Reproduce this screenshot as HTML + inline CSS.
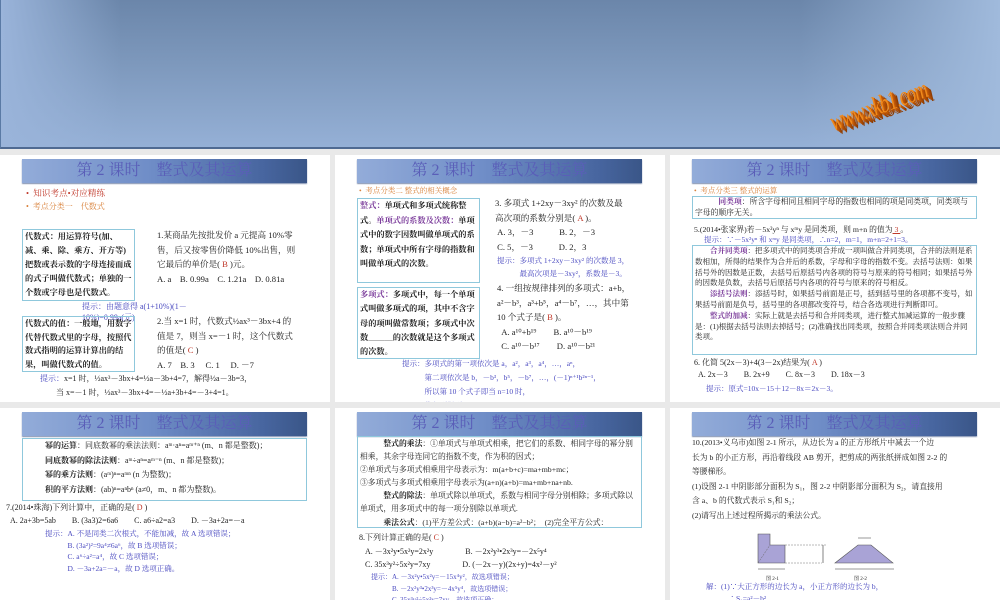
<!DOCTYPE html>
<html><head><meta charset="utf-8"><style>
*{margin:0;padding:0;box-sizing:border-box}
body{width:1000px;height:600px;overflow:hidden;background:#e9e9e9;font-family:"Liberation Serif","Noto Serif CJK SC","Noto Sans CJK SC",serif;color:#222;position:relative}
.ban{position:absolute;left:0;top:0;width:1000px;height:149px;background:linear-gradient(180deg,#6b86aa 0%,#7e99bd 45%,#95b0d6 100%);border-bottom:2px solid #4f6a92;border-left:1px solid #5a7aa5}
.ban:before{content:"";position:absolute;left:0;top:0;width:120px;height:147px;background:linear-gradient(90deg,#9ab4da,rgba(154,180,218,0))}
.ban:after{content:"";position:absolute;right:0;top:0;width:200px;height:147px;background:linear-gradient(270deg,#a0badc,rgba(160,186,220,0))}
.wm{position:absolute;left:828px;top:96px;transform:rotate(-20deg) scaleY(1.4);font:italic 19px "Liberation Serif",serif;color:#f08a1c;text-shadow:1px 1px 0 #c35a08,2px 2px 0 #b04e05,3px 3px 0 #a04504,4px 4px 0 #8d3c03;letter-spacing:-1px;z-index:2}
.s{position:absolute;background:#fff;overflow:hidden}
.t{position:absolute;height:24px;background:linear-gradient(90deg,#93acd9 0%,#6f8dc7 45%,#47659f 85%,#3a5688 100%);color:#5a5eb8;font:16px "Liberation Serif","Noto Serif CJK SC",serif;text-align:center;line-height:24px;box-shadow:0 1px 1px #8090b0;white-space:nowrap}
.ab{position:absolute;font-size:8.6px;line-height:14.5px;white-space:nowrap}
.bx{position:absolute;border:1px solid #8fc8dc;font-size:8.2px;line-height:14.5px;padding:0 2px;font-weight:bold;overflow:hidden}
.r{color:#c0392b}.o{color:#d9823b}.p{color:#7a3a9a}.b{color:#4a4ac0}
</style></head><body>
<div class="ban"></div>
<div class="wm">www.xkb1.com</div>

<!-- slide 1 -->
<div class="s" style="left:0;top:155px;width:330px;height:247px">
<div class="t" style="left:22px;top:4px;width:285px">第 2 课时&nbsp;&nbsp;&nbsp;&nbsp;整式及其运算</div>
<div class="ab r" style="left:26px;top:31px">•&nbsp; 知识考点•对应精练</div>
<div class="ab o" style="left:26px;top:45px;font-size:8px">•&nbsp; 考点分类一　代数式</div>
<div class="bx" style="left:22px;top:74px;width:113px;height:72px;line-height:14px">代数式：用运算符号(加、减、乘、除、乘方、开方等)把数或表示数的字母连接而成的式子叫做代数式；单独的一个数或字母也是代数式。</div>
<div class="ab" style="left:157px;top:73px;line-height:14.5px">1.某商品先按批发价 a 元提高 10%零<br>售，后又按零售价降低 10%出售，则<br>它最后的单价是( <span class="r">B</span> )元。<br>A. a　B. 0.99a　C. 1.21a　D. 0.81a</div>
<div class="ab b" style="left:82px;top:146px;font-size:8px;line-height:11px">提示：由题意得 a(1+10%)(1－<br>10%)=0.99a(元)</div>
<div class="bx" style="left:22px;top:161px;width:113px;height:56px;line-height:13.5px">代数式的值：一般地，用数字代替代数式里的字母，按照代数式指明的运算计算出的结果，叫做代数式的值。</div>
<div class="ab" style="left:157px;top:159px">2.当 x=1 时，代数式½ax³－3bx+4 的<br>值是 7，则当 x=－1 时，这个代数式<br>的值是( <span class="r">C</span> )<br>A. 7　B. 3　 C. 1　 D. －7</div>
<div class="ab" style="left:40px;top:217px;font-size:8px;line-height:14px"><span class="b">提示：</span>x=1 时，½ax³－3bx+4=½a－3b+4=7，解得½a－3b=3，<br>　　当 x=－1 时，½ax³－3bx+4=－½a+3b+4=－3+4=1。</div>
</div>

<!-- slide 2 -->
<div class="s" style="left:335px;top:155px;width:330px;height:247px">
<div class="t" style="left:22px;top:4px;width:285px">第 2 课时&nbsp;&nbsp;&nbsp;&nbsp;整式及其运算</div>
<div class="ab o" style="left:24px;top:29px;font-size:7.5px">•&nbsp; 考点分类二 整式的相关概念</div>
<div class="bx" style="left:22px;top:43px;width:123px;height:85px;line-height:14.5px"><span class="p">整式：</span>单项式和多项式统称整式。<span class="p">单项式的系数及次数：</span>单项式中的数字因数叫做单项式的系数；单项式中所有字母的指数和叫做单项式的次数。</div>
<div class="bx" style="left:22px;top:132px;width:123px;height:72px;line-height:14.3px"><span class="p">多项式：</span>多项式中，每一个单项式叫做多项式的项，其中不含字母的项叫做常数项；多项式中次数＿＿＿的次数就是这个多项式的次数。</div>
<div class="ab" style="left:160px;top:41px">3. 多项式 1+2xy－3xy² 的次数及最<br>高次项的系数分别是( <span class="r">A</span> )。<br>&nbsp;A. 3，－3　　　B. 2，－3<br>&nbsp;C. 5，－3　　　D. 2，3</div>
<div class="ab b" style="left:162px;top:99px;font-size:7.5px;line-height:13px">提示：多项式 1+2xy－3xy² 的次数是 3，<br>　　　最高次项是－3xy²，系数是－3。</div>
<div class="ab" style="left:162px;top:126px">4. 一组按规律排列的多项式：a+b，<br>a²－b³，a³+b⁵，a⁴－b⁷，…，其中第<br>10 个式子是( <span class="r">B</span> )。<br>&nbsp;&nbsp;A. a¹⁰+b¹⁹　　B. a¹⁰－b¹⁹<br>&nbsp;&nbsp;C. a¹⁰－b¹⁷　　D. a¹⁰－b²¹</div>
<div class="ab b" style="left:67px;top:202px;font-size:7.5px;line-height:14px">提示：多项式的第一项依次是 a，a²，a³，a⁴，…，aⁿ，<br>　　　第二项依次是 b，－b³，b⁵，－b⁷，…，(－1)ⁿ⁺¹b²ⁿ⁻¹，<br>　　　所以第 10 个式子即当 n=10 时，<br>　　　代入到得到 aⁿ+(－1)ⁿ⁺¹b²ⁿ⁻¹=a¹⁰－b¹⁹。</div>
</div>

<!-- slide 3 -->
<div class="s" style="left:670px;top:155px;width:330px;height:247px">
<div class="t" style="left:22px;top:4px;width:285px">第 2 课时&nbsp;&nbsp;&nbsp;&nbsp;整式及其运算</div>
<div class="ab o" style="left:24px;top:29px;font-size:7.5px">•&nbsp; 考点分类三 整式的运算</div>
<div class="bx" style="left:22px;top:41px;width:285px;height:23px;font-weight:normal;font-size:7.8px;line-height:10.5px">　　　<span class="p"><b>同类项</b></span>：所含字母相同且相同字母的指数也相同的项是同类项，同类项与字母的顺序无关。</div>
<div class="ab" style="left:24px;top:68px;font-size:7.8px">5.(2014•张家界)若－5x²yⁿ 与 xᵐy 是同类项，则 m+n 的值为<u class="r"> 3 </u>。</div>
<div class="ab b" style="left:34px;top:79px;font-size:7.5px;line-height:11px">提示：∵－5x²yⁿ 和 xᵐy 是同类项，∴n=2，m=1，m+n=2+1=3。</div>
<div class="bx" style="left:22px;top:90px;width:285px;height:110px;font-weight:normal;font-size:7.5px;line-height:10.8px">　　<b class="p">合并同类项</b>：把多项式中的同类项合并成一项叫做合并同类项，合并的法则是系数相加，所得的结果作为合并后的系数，字母和字母的指数不变。去括号法则：如果括号外的因数是正数，去括号后原括号内各项的符号与原来的符号相同；如果括号外的因数是负数，去括号后原括号内各项的符号与原来的符号相反。<br>　　<b class="p">添括号法则</b>：添括号时，如果括号前面是正号，括到括号里的各项都不变号，如果括号前面是负号，括号里的各项都改变符号，结合各选项进行判断即可。<br>　　<b class="p">整式的加减</b>：实际上就是去括号和合并同类项，进行整式加减运算的一般步骤是：(1)根据去括号法则去掉括号；(2)准确找出同类项，按照合并同类项法则合并同类项。</div>
<div class="ab" style="left:24px;top:202px;font-size:8px;line-height:11.5px">6. 化简 5(2x－3)+4(3－2x)结果为( <span class="r">A</span> )<br>&nbsp;&nbsp;A. 2x－3　　B. 2x+9　　C. 8x－3　　D. 18x－3</div>
<div class="ab b" style="left:36px;top:229px;font-size:7.5px;line-height:10px">提示：原式=10x－15＋12－8x＝2x－3。</div>
</div>

<!-- slide 4 -->
<div class="s" style="left:0;top:408px;width:330px;height:192px">
<div class="t" style="left:22px;top:4px;width:285px">第 2 课时&nbsp;&nbsp;&nbsp;&nbsp;整式及其运算</div>
<div class="bx" style="left:22px;top:30px;width:285px;height:63px;font-weight:normal;font-size:8px;line-height:14.5px;padding-left:22px"><b>幂的运算</b>：同底数幂的乘法法则：aᵐ·aⁿ=aᵐ⁺ⁿ (m、n 都是整数)；<br><b>同底数幂的除法法则</b>：aᵐ÷aⁿ=aᵐ⁻ⁿ (m、n 都是整数)；<br><b>幂的乘方法则</b>：(aᵐ)ⁿ=aᵐⁿ (n 为整数)；<br><b>积的平方法则</b>：(ab)ⁿ=aⁿbⁿ (a≠0，m、n 都为整数)。</div>
<div class="ab" style="left:6px;top:94px;font-size:8px;line-height:12.5px">7.(2014•珠海)下列计算中，正确的是( <span class="r">D</span> )<br>&nbsp;&nbsp;A. 2a+3b=5ab　　B. (3a3)2=6a6　　C. a6÷a2=a3　　D. －3a+2a=－a</div>
<div class="ab b" style="left:45px;top:120px;font-size:7.5px;line-height:11.5px">提示：A. 不是同类二次根式，不能加减，故 A 选项错误；<br>　　　B. (3a²)²=9a⁴≠6a⁶，故 B 选项错误；<br>　　　C. a⁶÷a²=a⁴，故 C 选项错误；<br>　　　D. －3a+2a=－a，故 D 选项正确。</div>
</div>

<!-- slide 5 -->
<div class="s" style="left:335px;top:408px;width:330px;height:192px">
<div class="t" style="left:22px;top:4px;width:285px">第 2 课时&nbsp;&nbsp;&nbsp;&nbsp;整式及其运算</div>
<div class="bx" style="left:22px;top:28px;width:285px;height:92px;font-weight:normal;font-size:7.8px;line-height:13.1px">　　　<b>整式的乘法</b>：①单项式与单项式相乘，把它们的系数、相同字母的幂分别相乘，其余字母连同它的指数不变，作为积的因式；<br>②单项式与多项式相乘用字母表示为：m(a+b+c)=ma+mb+mc；<br>③多项式与多项式相乘用字母表示为(a+n)(a+b)=ma+mb+na+nb.<br>　　　<b>整式的除法</b>：单项式除以单项式，系数与相同字母分别相除；多项式除以单项式，用多项式中的每一项分别除以单项式.<br>　　　<b>乘法公式</b>：(1)平方差公式：(a+b)(a−b)=a²−b²；　(2)完全平方公式：<br><span style="font-size:6.5px">(a±b)²=a²±2ab+b²</span>.</div>
<div class="ab" style="left:24px;top:123px;font-size:8px;line-height:13.5px">8.下列计算正确的是( <span class="r">C</span> )<br>&nbsp;&nbsp;&nbsp;A. －3x²y•5x²y=2x²y　　　　B. －2x²y³•2x³y=－2x⁵y⁴<br>&nbsp;&nbsp;&nbsp;C. 35x³y²÷5x²y=7xy　　　　D. (－2x－y)(2x+y)=4x²－y²</div>
<div class="ab b" style="left:36px;top:164px;font-size:7px;line-height:11.5px">提示：A. －3x²y•5x²y=－15x⁴y²，故选项错误；<br>　　　B. －2x²y³•2x³y=－4x⁵y⁴，故选项错误；<br>　　　C. 35x³y²÷5x²y=7xy，故选项正确；</div>
</div>

<!-- slide 6 -->
<div class="s" style="left:670px;top:408px;width:330px;height:192px">
<div class="t" style="left:22px;top:4px;width:285px">第 2 课时&nbsp;&nbsp;&nbsp;&nbsp;整式及其运算</div>
<div class="ab" style="left:22px;top:28px;line-height:14.5px;font-size:7.8px">10.(2013•义乌市)如图 2-1 所示，从边长为 a 的正方形纸片中减去一个边<br>长为 b 的小正方形，再沿着线段 AB 剪开，把剪成的两张纸拼成如图 2-2 的<br>等腰梯形。<br>(1)设图 2-1 中阴影部分面积为 S₁，图 2-2 中阴影部分面积为 S₂，请直接用<br>含 a、b 的代数式表示 S₁和 S₂；<br>(2)请写出上述过程所揭示的乘法公式。</div>
<svg style="position:absolute;left:70px;top:124px" width="160" height="48">
<path d="M18 2 H30 V13 H45 V31 H18 Z" fill="#a9a3d6" stroke="#555" stroke-width=".6"/>
<path d="M18 31 L30 13" stroke="#666" stroke-width=".5" stroke-dasharray="2 1"/>
<path d="M45 13 H86 M45 31 H82" stroke="#777" stroke-width=".5" stroke-dasharray="2 1"/>
<path d="M83 13 V31 M18 37 H45" stroke="#333" stroke-width=".6"/>
<path d="M118 13 H131 L153 31 H95 Z" fill="#a9a3d6" stroke="#555" stroke-width=".6"/>
<path d="M95 37 H154 M118 6 H131" stroke="#333" stroke-width=".6"/>
</svg>
<div class="ab" style="left:96px;top:165px;font-size:5px">图 2-1</div>
<div class="ab" style="left:184px;top:165px;font-size:5px">图 2-2</div>
<div class="ab b" style="left:36px;top:173px;font-size:7.5px;line-height:12px">解：(1)∵大正方形的边长为 a，小正方形的边长为 b，<br>　　　∴S₁=a²－b²，</div>
</div>
</body></html>
